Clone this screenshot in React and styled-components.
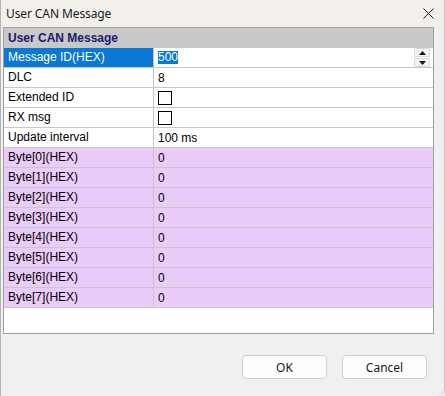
import { createGlobalStyle } from "styled-components";
import styled from "styled-components";

// rows shown in the property grid
const fields = [
  { label: "DLC", value: "8" },
  { label: "Extended ID", check: true },
  { label: "RX msg", check: true },
  { label: "Update interval", value: "100 ms" },
];

const bytes = new Array(8).fill("0");

const App = () => {
  return (
    <Window>
      <GlobalStyle />

      <TitleBar>
        <Title>User CAN Message</Title>
        <Close aria-label="close">
          <svg width="11" height="11" viewBox="0 0 11 11">
            <path d="M0.5 0.5 L10.5 10.5 M10.5 0.5 L0.5 10.5" stroke="#1a1a1a" strokeWidth="1" />
          </svg>
        </Close>
      </TitleBar>

      <Body>
        <Panel>
          <GroupHeader>User CAN Message</GroupHeader>

          <Grid>
            <Label selected>Message ID(HEX)</Label>
            <Value>
              <Selected>500</Selected>
              <Spin>
                <SpinButton>
                  <svg width="7" height="4" viewBox="0 0 7 4"><path d="M3.5 0 L7 4 L0 4 Z" fill="#111" /></svg>
                </SpinButton>
                <SpinButton>
                  <svg width="7" height="4" viewBox="0 0 7 4"><path d="M0 0 L7 0 L3.5 4 Z" fill="#111" /></svg>
                </SpinButton>
              </Spin>
            </Value>

            {fields.map((f) => (
              <Row key={f.label}>
                <Label>{f.label}</Label>
                <Value>{f.check ? <Check /> : f.value}</Value>
              </Row>
            ))}

            {bytes.map((b, i) => (
              <Row key={i}>
                <Label purple>Byte[{i}](HEX)</Label>
                <Value purple>{b}</Value>
              </Row>
            ))}
          </Grid>
        </Panel>

        <Buttons>
          <Button>OK</Button>
          <Button>Cancel</Button>
        </Buttons>
      </Body>
    </Window>
  );
};

export default App;



// styling starts from here

const GlobalStyle = createGlobalStyle`
  html, body {
    margin: 0;
    padding: 0;
    overflow: hidden;
    background: #f0f0f0;
  }
`

const Window = styled.div`
  width: 445px;
  height: 396px;
  box-sizing: border-box;
  display: flex;
  flex-direction: column;
  background: #f0f0f0;
  border-left: 1px solid #b4b4b4;
  border-right: 1px solid #c4c4c4;
  border-bottom-right-radius: 7px;
  font-family: "Noto Sans", "Open Sans", sans-serif;
`

const TitleBar = styled.div`
  height: 27px;
  display: flex;
  align-items: center;
  justify-content: space-between;
  padding: 0 8px 0 5px;
  background: #f3f0ec;
`

const Title = styled.div`
  font-size: 12px;
  color: #1a1a1a;
  letter-spacing: -0.1px;
`

const Close = styled.div`
  width: 16px;
  height: 16px;
  display: flex;
  align-items: center;
  justify-content: center;
`

const Body = styled.div`
  flex: 1;
  display: flex;
  flex-direction: column;
  padding: 0 10px 0 2px;
`

const Panel = styled.div`
  height: 307px;
  box-sizing: border-box;
  background: #fff;
  border: 1px solid #a0a0a0;
  font-family: "Liberation Sans", Arial, sans-serif;
  font-size: 12px;
  color: #000;
`

const GroupHeader = styled.div`
  height: 20px;
  line-height: 20px;
  padding-left: 4px;
  background: #c8c8c8;
  color: #1b1b70;
  font-weight: bold;
`

const Grid = styled.div`
  display: grid;
  grid-template-columns: 150px 1fr;
`

const Row = styled.div`
  display: contents;
`

const Label = styled.div`
  height: 19px;
  line-height: 19px;
  padding-left: 4px;
  border-right: 1px solid #c4c4c4;
  border-bottom: 1px solid #c8c8c8;
  background: ${(p) => (p.selected ? "#0a78d7" : p.purple ? "#ebcbf9" : "#fff")};
  color: ${(p) => (p.selected ? "#fff" : "#000")};
  white-space: nowrap;
`

const Value = styled.div`
  height: 19px;
  display: flex;
  align-items: center;
  padding-left: 4px;
  border-bottom: 1px solid #c8c8c8;
  background: ${(p) => (p.purple ? "#ebcbf9" : "#fff")};
`

const Selected = styled.span`
  background: #0a78d7;
  color: #fff;
  line-height: 13px;
`

const Spin = styled.div`
  margin-left: auto;
  margin-right: 3px;
  display: flex;
  flex-direction: column;
  gap: 1px;
`

const SpinButton = styled.div`
  width: 14px;
  height: 7px;
  display: flex;
  align-items: center;
  justify-content: center;
  background: #f4f4f4;
  border: 1px solid #dadada;
  border-radius: 1px;
`

const Check = styled.div`
  width: 12px;
  height: 12px;
  border: 1px solid #000;
  background: #fff;
`

const Buttons = styled.div`
  display: flex;
  justify-content: flex-end;
  gap: 15px;
  padding: 21px 7px 0 0;
`

const Button = styled.button`
  width: 85px;
  height: 24px;
  background: #fdfdfd;
  border: 1px solid #d0d0d0;
  border-radius: 4px;
  font-family: "Noto Sans", "Open Sans", sans-serif;
  font-size: 12px;
  color: #1a1a1a;
  padding: 0;
`
